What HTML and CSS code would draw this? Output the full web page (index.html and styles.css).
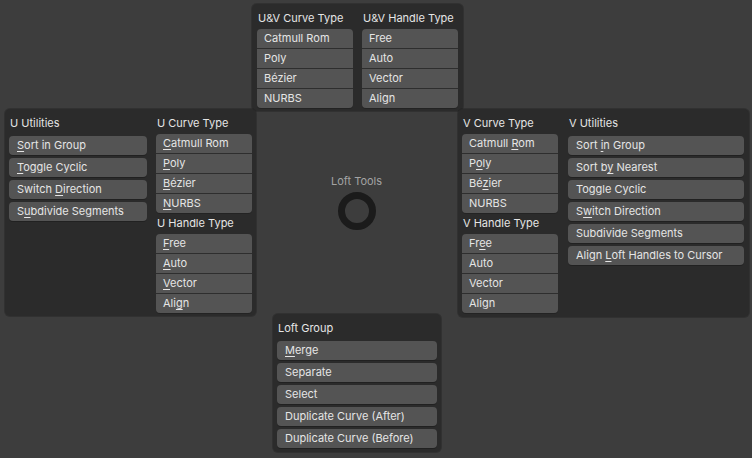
FILE: index.html
```html
<!DOCTYPE html>
<html>
<head>
<meta charset="utf-8">
<link rel="stylesheet" href="styles.css">
</head>
<body>
<div class="pie">
  <div class="row row-top">
    <div class="panel panel-top">
      <div class="col w96">
        <div class="title">U&amp;V Curve Type</div>
        <div class="stack">
          <div class="item">Catmull Rom</div>
          <div class="item">Poly</div>
          <div class="item">Bézier</div>
          <div class="item">NURBS</div>
        </div>
      </div>
      <div class="col w96">
        <div class="title">U&amp;V Handle Type</div>
        <div class="stack">
          <div class="item">Free</div>
          <div class="item">Auto</div>
          <div class="item">Vector</div>
          <div class="item">Align</div>
        </div>
      </div>
    </div>
  </div>

  <div class="row row-mid">
    <div class="panel panel-left">
      <div class="col w138">
        <div class="title">U Utilities</div>
        <div class="btns">
          <div class="btn"><u>S</u>ort in Group</div>
          <div class="btn"><u>T</u>oggle Cyclic</div>
          <div class="btn">Switch <u>D</u>irection</div>
          <div class="btn">S<u>u</u>bdivide Segments</div>
        </div>
      </div>
      <div class="col w96">
        <div class="title">U Curve Type</div>
        <div class="stack">
          <div class="item"><u>C</u>atmull Rom</div>
          <div class="item"><u>P</u>oly</div>
          <div class="item"><u>B</u>ézier</div>
          <div class="item"><u>N</u>URBS</div>
        </div>
        <div class="title title-sub">U Handle Type</div>
        <div class="stack">
          <div class="item"><u>F</u>ree</div>
          <div class="item"><u>A</u>uto</div>
          <div class="item"><u>V</u>ector</div>
          <div class="item">Ali<u>g</u>n</div>
        </div>
      </div>
    </div>

    <div class="center">
      <div class="center-label">Loft Tools</div>
      <div class="ring"></div>
    </div>

    <div class="panel panel-right">
      <div class="col w96">
        <div class="title">V Curve Type</div>
        <div class="stack">
          <div class="item">Catmull <u>R</u>om</div>
          <div class="item">P<u>o</u>ly</div>
          <div class="item">Bé<u>z</u>ier</div>
          <div class="item">NURBS</div>
        </div>
        <div class="title title-sub">V Handle Type</div>
        <div class="stack">
          <div class="item">Fr<u>e</u>e</div>
          <div class="item">Auto</div>
          <div class="item">Vector</div>
          <div class="item">Align</div>
        </div>
      </div>
      <div class="col w176">
        <div class="title">V Utilities</div>
        <div class="btns">
          <div class="btn">Sort <u>i</u>n Group</div>
          <div class="btn">Sort b<u>y</u> Nearest</div>
          <div class="btn">Toggle Cyclic</div>
          <div class="btn">S<u>w</u>itch Direction</div>
          <div class="btn">Subdivide Segments</div>
          <div class="btn">Align <u>L</u>oft Handles to Cursor</div>
        </div>
      </div>
    </div>
  </div>

  <div class="row row-bottom">
    <div class="panel panel-bottom">
      <div class="col w160">
        <div class="title">Loft Group</div>
        <div class="btns">
          <div class="btn"><u>M</u>erge</div>
          <div class="btn">Separate</div>
          <div class="btn">Select</div>
          <div class="btn">Duplicate Curve (After)</div>
          <div class="btn">Duplicate Curve (Before)</div>
        </div>
      </div>
    </div>
  </div>
</div>
</body>
</html>
```

FILE: styles.css
```css
* { box-sizing: border-box; }
html, body {
  margin: 0;
  padding: 0;
  width: 752px;
  height: 458px;
  overflow: hidden;
  background: #3d3d3d;
  font-family: "Inter", "DejaVu Sans", sans-serif;
  font-size: 11px;
  color: #e5e5e5;
}
.pie {
  padding-top: 4px;
  display: flex;
  flex-direction: column;
}
.row { display: flex; align-items: flex-start; }
.row-mid { margin-top: -2px; }
.row-bottom { margin-top: -3px; }

.panel {
  background: #2b2b2b;
  border-radius: 5px;
  box-shadow: 0 0 0 1px rgba(30,30,30,0.35);
  display: flex;
  align-items: flex-start;
  gap: 9px;
  padding: 7px 5px 3px 5px;
}
.panel-top { margin-left: 252px; width: 211px; height: 107px; }
.panel-left { margin-left: 5px; width: 251px; height: 207px; padding-left: 4px; padding-right: 4px; }
.panel-right { width: 291px; height: 208px; padding-left: 4px; gap: 10px; }
.panel-bottom { margin-left: 273px; width: 168px; height: 138px; padding-left: 4px; padding-right: 4px; }

.col { display: flex; flex-direction: column; }
.w96 { width: 96px; }
.w138 { width: 138px; }
.w176 { width: 176px; }
.w160 { width: 160px; }

.title {
  height: 14px;
  line-height: 14px;
  padding-left: 1px;
  margin-bottom: 4px;
  white-space: nowrap;
}
.title-sub { margin-top: 3px; }

.stack {
  display: flex;
  flex-direction: column;
  border-radius: 4px;
  overflow: hidden;
  background: #2e2e2e;
  gap: 1px;
  box-shadow: 0 1px 0 rgba(0,0,0,0.18);
}
.item {
  height: 19px;
  line-height: 19px;
  background: #545454;
  padding-left: 7px;
  white-space: nowrap;
}

.btns {
  display: flex;
  flex-direction: column;
  gap: 3px;
  margin-top: 2px;
}
.btn {
  height: 19px;
  line-height: 19px;
  background: #545454;
  border-radius: 4px;
  padding-left: 8px;
  white-space: nowrap;
  box-shadow: 0 1px 0 rgba(0,0,0,0.22);
}

u {
  text-decoration: underline;
  text-decoration-thickness: 1px;
  text-underline-offset: 2px;
}

.center {
  width: 202px;
  display: flex;
  flex-direction: column;
  align-items: center;
  padding-top: 65px;
  padding-right: 1px;
}
.center-label {
  height: 14px;
  line-height: 14px;
  color: #a3a3a3;
}
.ring {
  margin-top: 4px;
  width: 38px;
  height: 38px;
  border-radius: 50%;
  border: 7px solid #1b1b1b;
}
```
